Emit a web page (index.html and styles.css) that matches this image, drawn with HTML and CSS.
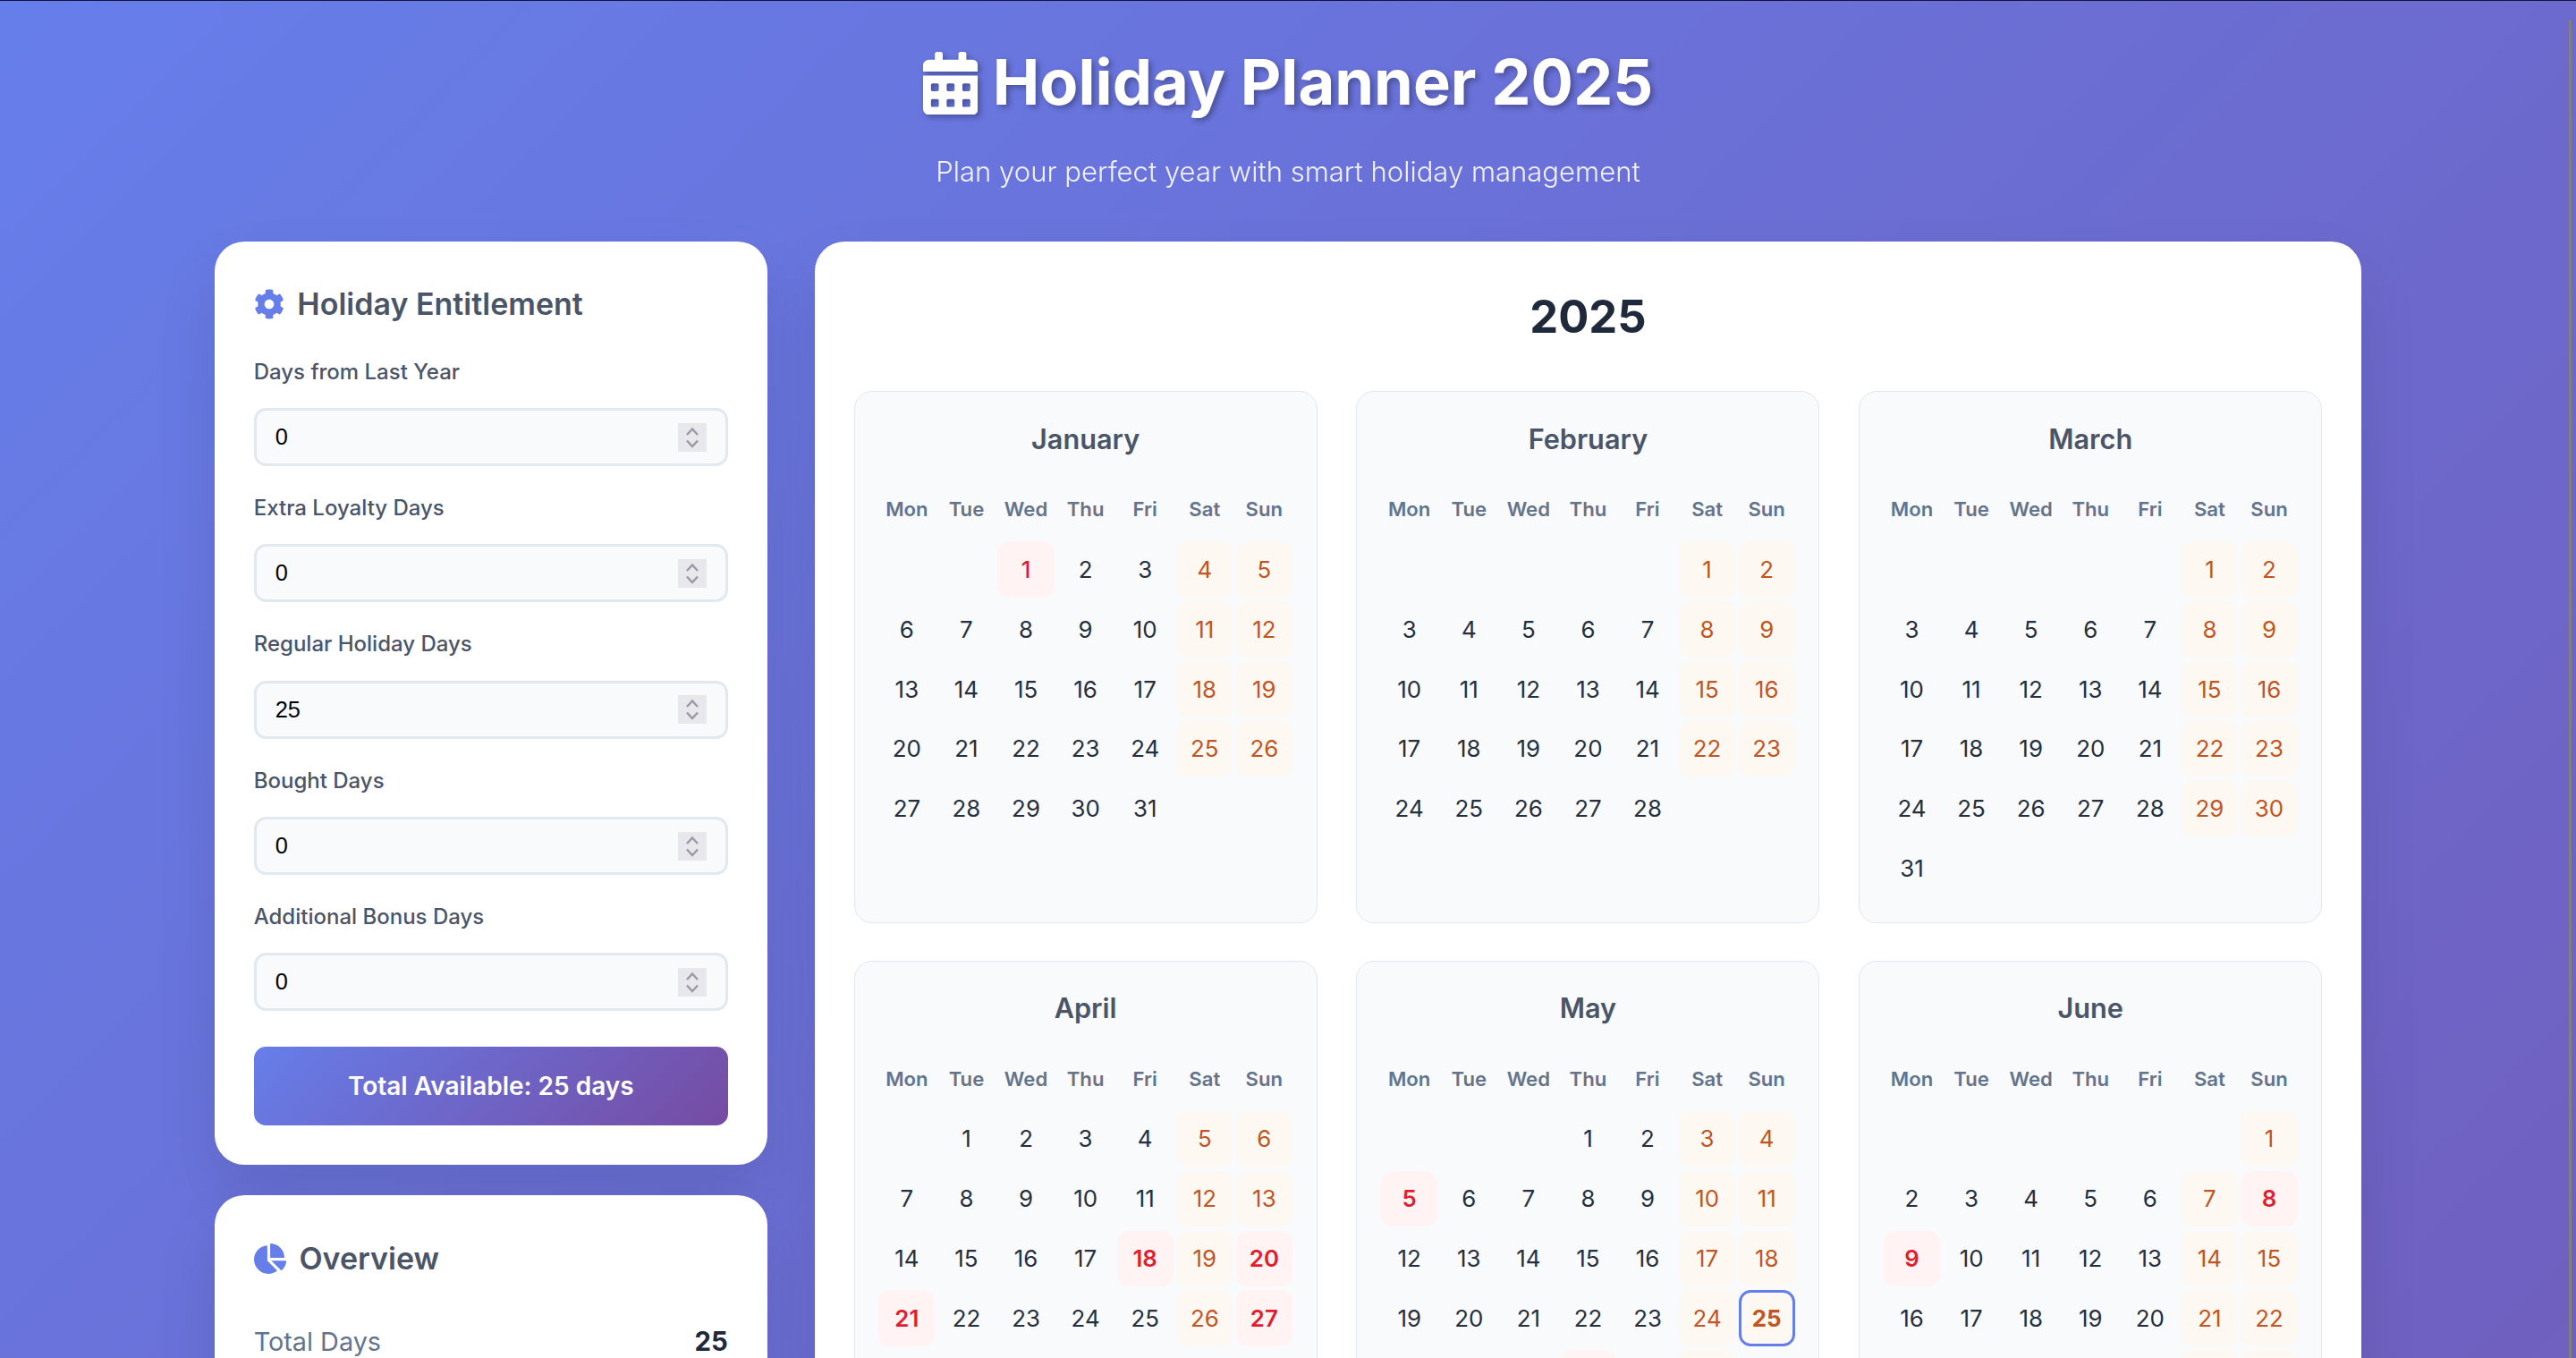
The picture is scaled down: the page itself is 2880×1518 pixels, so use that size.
FILE: index.html
```html
<!DOCTYPE html>
<html lang="en">
<head>
  <meta charset="UTF-8" />
  <meta name="viewport" content="width=device-width, initial-scale=1.0"/>
  <title>Holiday Planner 2025</title>
  <link rel="stylesheet" href="styles.css">
</head>
<body>
  <div class="page">
    <header class="header">
      <h1>
        <svg class="title-icon" viewBox="0 0 448 512"><path d="M0 464c0 26.5 21.5 48 48 48h352c26.5 0 48-21.5 48-48V192H0v272zm320-196c0-6.6 5.4-12 12-12h40c6.6 0 12 5.4 12 12v40c0 6.6-5.4 12-12 12h-40c-6.6 0-12-5.4-12-12v-40zm0 128c0-6.6 5.4-12 12-12h40c6.6 0 12 5.4 12 12v40c0 6.6-5.4 12-12 12h-40c-6.6 0-12-5.4-12-12v-40zM192 268c0-6.6 5.4-12 12-12h40c6.6 0 12 5.4 12 12v40c0 6.6-5.4 12-12 12h-40c-6.6 0-12-5.4-12-12v-40zm0 128c0-6.6 5.4-12 12-12h40c6.6 0 12 5.4 12 12v40c0 6.6-5.4 12-12 12h-40c-6.6 0-12-5.4-12-12v-40zM64 268c0-6.6 5.4-12 12-12h40c6.6 0 12 5.4 12 12v40c0 6.6-5.4 12-12 12H76c-6.6 0-12-5.4-12-12v-40zm0 128c0-6.6 5.4-12 12-12h40c6.6 0 12 5.4 12 12v40c0 6.6-5.4 12-12 12H76c-6.6 0-12-5.4-12-12v-40zM400 64h-48V16c0-8.8-7.2-16-16-16h-32c-8.8 0-16 7.2-16 16v48H160V16c0-8.8-7.2-16-16-16h-32c-8.8 0-16 7.2-16 16v48H48C21.5 64 0 85.5 0 112v48h448v-48c0-26.5-21.5-48-48-48z"/></svg>
        Holiday Planner 2025
      </h1>
      <p class="subtitle">Plan your perfect year with smart holiday management</p>
    </header>

    <div class="layout">
      <aside class="sidebar">
        <section class="card">
          <h2 class="card-title">
            <svg class="card-icon" viewBox="0 0 512 512"><path d="M487.4 315.7l-42.6-24.6c4.3-23.2 4.3-47 0-70.2l42.6-24.6c4.9-2.8 7.1-8.6 5.5-14-11.1-35.6-30-67.8-54.7-94.6-3.8-4.1-10-5.1-14.8-2.3L380.8 110c-17.9-15.4-38.5-27.3-60.8-35.1V25.8c0-5.6-3.9-10.5-9.4-11.7-36.7-8.2-74.3-7.8-109.2 0-5.5 1.2-9.4 6.1-9.4 11.7V75c-22.2 7.9-42.8 19.8-60.8 35.1L88.7 85.5c-4.9-2.8-11-1.9-14.8 2.3-24.7 26.7-43.6 58.9-54.7 94.6-1.7 5.4.6 11.2 5.5 14L67.3 221c-4.3 23.2-4.3 47 0 70.2l-42.6 24.6c-4.9 2.8-7.1 8.6-5.5 14 11.1 35.6 30 67.8 54.7 94.6 3.8 4.1 10 5.1 14.8 2.3l42.6-24.6c17.9 15.4 38.5 27.3 60.8 35.1v49.2c0 5.6 3.9 10.5 9.4 11.7 36.7 8.2 74.3 7.8 109.2 0 5.5-1.2 9.4-6.1 9.4-11.7v-49.2c22.2-7.9 42.8-19.8 60.8-35.1l42.6 24.6c4.9 2.8 11 1.9 14.8-2.3 24.7-26.7 43.6-58.9 54.7-94.6 1.5-5.5-.7-11.3-5.6-14.1zM256 336c-44.1 0-80-35.9-80-80s35.9-80 80-80 80 35.9 80 80-35.9 80-80 80z"/></svg>
            Holiday Entitlement
          </h2>
          <div id="fields"></div>
          <div class="total">Total Available: 25 days</div>
        </section>

        <section class="card">
          <h2 class="card-title overview-title">
            <svg class="card-icon" viewBox="0 0 544 512"><path d="M527.79 288H290.5l158.03 158.03c6.04 6.04 15.98 6.53 22.19.68 38.7-36.46 65.32-85.61 73.13-140.86 1.34-9.46-6.51-17.85-16.06-17.85zm-15.83-64.8C503.72 103.74 408.26 8.28 288.8.04 279.68-.59 272 7.1 272 16.24V240h223.77c9.14 0 16.82-7.68 16.19-16.8zM224 288V50.71c0-9.55-8.39-17.4-17.84-16.06C86.99 51.49-4.1 155.6.14 280.37 4.5 408.51 114.83 513.59 243.03 511.98c50.4-.63 96.97-16.87 135.26-44.03 7.9-5.6 8.42-17.23 1.57-24.08L224 288z"/></svg>
            Overview
          </h2>
          <div class="stat"><span>Total Days</span><strong>25</strong></div>
        </section>
      </aside>

      <main class="card calendar">
        <h2 class="year">2025</h2>
        <div class="months" id="months"></div>
      </main>
    </div>
  </div>
  <div class="scroll-thumb"></div>

  <script>
    const fields = [
      ['Days from Last Year', 0],
      ['Extra Loyalty Days', 0],
      ['Regular Holiday Days', 25],
      ['Bought Days', 0],
      ['Additional Bonus Days', 0]
    ];
    const spinner = '<svg class="spin" viewBox="0 0 32 32"><polyline points="10,13 16,6.5 22,13"/><polyline points="10,19.5 16,26 22,19.5"/></svg>';

    document.getElementById('fields').innerHTML = fields.map(([label, value]) => `
      <div class="field">
        <label>${label}</label>
        <div class="number"><input type="number" value="${value}">${spinner}</div>
      </div>`).join('');

    const monthNames = ['January', 'February', 'March', 'April', 'May', 'June', 'July', 'August', 'September', 'October', 'November', 'December'];
    const dayNames = ['Mon', 'Tue', 'Wed', 'Thu', 'Fri', 'Sat', 'Sun'];
    const holidays = { 0: [1], 3: [18, 20, 21, 27], 4: [5, 29], 5: [8, 9], 11: [25, 26] };

    // Build all twelve months
    document.getElementById('months').innerHTML = monthNames.map((name, m) => {
      const blanks = (new Date(2025, m, 1).getDay() + 6) % 7;
      const count = new Date(2025, m + 1, 0).getDate();
      let cells = '<div class="day"></div>'.repeat(blanks);
      for (let d = 1; d <= count; d++) {
        const weekday = (blanks + d - 1) % 7;
        let cls = 'day';
        if (holidays[m] && holidays[m].includes(d)) cls += ' holiday';
        else if (weekday > 4) cls += ' weekend';
        if (m === 0 && d === 1) cls += ' past';
        if (m === 4 && d === 25) cls += ' today';
        cells += `<div class="${cls}">${d}</div>`;
      }
      return `
        <div class="month">
          <h3>${name}</h3>
          <div class="days">
            ${dayNames.map(n => `<div class="day-name">${n}</div>`).join('')}
            ${cells}
          </div>
        </div>`;
    }).join('');
  </script>
</body>
</html>
```

FILE: styles.css
```css
html {
  font-size: 26.667px;
}
body {
  margin: 0;
  height: 100vh;
  overflow: hidden;
  font-family: Inter, "Noto Sans", sans-serif;
  line-height: 1.6;
  color: #2d3748;
}
.page {
  box-sizing: border-box;
  min-height: 4500px;
  padding: 1.33rem 0;
  border-top: 1px solid #14143c;
  background: linear-gradient(135deg, #667eea 0%, #764ba2 100%);
}
.header {
  text-align: center;
  color: white;
  margin-bottom: 1.98rem;
}
h1 {
  display: flex;
  justify-content: center;
  align-items: center;
  gap: 0.62rem;
  margin: 0 0 0.675rem;
  font-size: 2.64rem;
  font-weight: 700;
  text-shadow: 0.125rem 0.125rem 0.25rem rgba(0,0,0,0.3);
}
.title-icon {
  height: 2.64rem;
  fill: white;
  filter: drop-shadow(0.125rem 0.125rem 0.125rem rgba(0,0,0,0.3));
}
.subtitle {
  margin: 0;
  font-size: 1.165rem;
  font-weight: 300;
  opacity: 0.9;
}
.layout {
  display: grid;
  grid-template-columns: minmax(0, 1fr) minmax(0, 2.8fr);
  gap: 2rem;
  width: 90rem;
  margin: 0 auto;
}
.sidebar {
  display: flex;
  flex-direction: column;
  gap: 1.28rem;
}
.card {
  background: white;
  border-radius: 1.25rem;
  padding: 1.64rem;
  box-shadow: 0 1.25rem 2.5rem rgba(0,0,0,0.1);
}
.card-title {
  display: flex;
  align-items: center;
  gap: 0.55rem;
  margin: 0 0 1.085rem;
  font-size: 1.275rem;
  font-weight: 600;
  color: #4a5568;
}
.card-icon {
  height: 1.275rem;
  fill: #667eea;
}
.overview-title {
  margin-bottom: 1.6rem;
}
.field {
  margin-bottom: 1.045rem;
}
.field label {
  display: block;
  margin-bottom: 0.79rem;
  font-size: 0.9rem;
  font-weight: 500;
  color: #4a5568;
}
.number {
  display: flex;
  align-items: center;
  height: 65px;
  box-sizing: border-box;
  padding: 0 21px;
  border: 0.125rem solid #e2e8f0;
  border-radius: 0.5rem;
  background: #f8fafc;
}
.number input {
  flex: 1;
  min-width: 0;
  padding: 0;
  border: none;
  outline: none;
  background: transparent;
  font-family: "Liberation Sans", Arial, sans-serif;
  font-size: 0.95rem;
  color: black;
  appearance: textfield;
}
.spin {
  width: 32px;
  height: 32px;
  background: #e8e8ec;
  fill: none;
  stroke: #9a98a4;
  stroke-width: 2.4;
}
.total {
  margin-top: 1.49rem;
  padding: 0.81rem;
  border-radius: 0.5rem;
  background: linear-gradient(135deg, #667eea, #764ba2);
  color: white;
  text-align: center;
  font-size: 1.05rem;
  font-weight: 600;
}
.stat {
  display: flex;
  justify-content: space-between;
  align-items: center;
  font-size: 1.08rem;
  color: #64748b;
}
.stat strong {
  font-size: 1.1rem;
  font-weight: 700;
  color: #1e293b;
}
.year {
  margin: 0 0 1.605rem;
  text-align: center;
  font-size: 1.9rem;
  font-weight: 700;
  color: #1e293b;
}
.months {
  display: grid;
  grid-template-columns: repeat(3, minmax(0, 1fr));
  gap: 1.555rem 1.64rem;
}
.month {
  padding: 1.03rem 1rem 1.09rem;
  border: 0.0625rem solid #e2e8f0;
  border-radius: 0.75rem;
  background: #f8fafc;
}
.month h3 {
  margin: 0 0 0.9rem;
  text-align: center;
  font-size: 1.15rem;
  font-weight: 600;
  color: #4a5568;
}
.days {
  display: grid;
  grid-template-columns: repeat(7, minmax(0, 1fr));
  gap: 0.16rem 0.125rem;
}
.day-name {
  padding: 0.5rem 0 0.55rem;
  text-align: center;
  font-size: 0.83rem;
  line-height: 1.54;
  font-weight: 600;
  color: #64748b;
}
.day {
  display: flex;
  justify-content: center;
  align-items: center;
  box-sizing: border-box;
  height: 2.35rem;
  border-radius: 0.5rem;
  font-size: 0.97rem;
  color: #262f3d;
}
.weekend {
  background: #fef8f3;
  color: #c05621;
}
.holiday {
  background: #fff3f3;
  color: #e01e2f;
  font-weight: 600;
}
.past {
  font-weight: 500;
}
.today {
  border: 0.125rem solid #667eea;
  font-weight: 700;
}
.scroll-thumb {
  position: absolute;
  top: 22px;
  right: 5px;
  bottom: 0;
  width: 3px;
  background: #808080;
}
```
